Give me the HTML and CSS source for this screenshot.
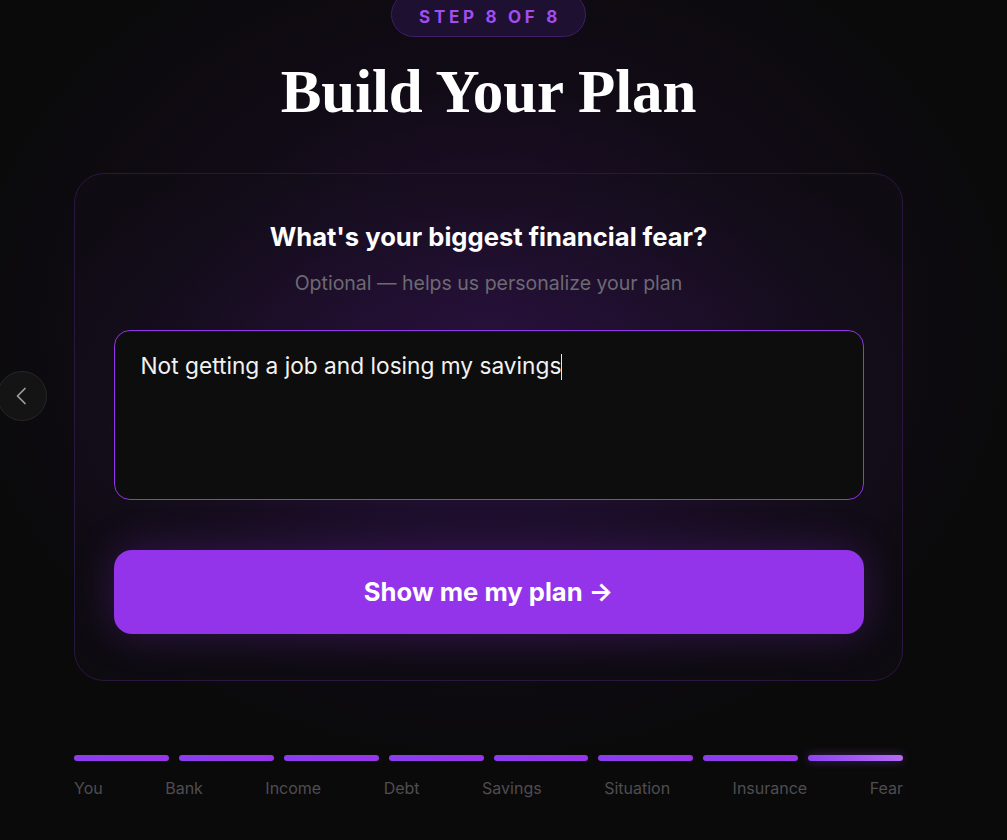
FILE: index.html
```html
<!DOCTYPE html>
<html lang="en">
<head>
<meta charset="utf-8">
<title>Build Your Plan</title>
<link rel="stylesheet" href="styles.css">
</head>
<body>
<div class="glow"></div>
<button class="back" aria-label="Back">
  <svg width="22" height="22" viewBox="0 0 22 22" fill="none"><path d="M14 3.5 6.5 11l7.5 7.5" stroke="#a0a0a0" stroke-width="1.7" stroke-linecap="round" stroke-linejoin="round"/></svg>
</button>
<main class="page">
  <div class="head">
    <div class="pill">STEP 8 OF 8</div>
    <h1 class="title">Build Your Plan</h1>
  </div>
  <section class="card">
    <h2 class="question">What's your biggest financial fear?</h2>
    <p class="hint">Optional — helps us personalize your plan</p>
    <div class="field"><span class="field-text">Not getting a job and losing my savings</span><span class="caret"></span></div>
    <button class="cta">Show me my plan →</button>
  </section>
  <div class="progress">
    <div class="bars">
      <span class="bar"></span><span class="bar"></span><span class="bar"></span><span class="bar"></span>
      <span class="bar"></span><span class="bar"></span><span class="bar"></span><span class="bar current"></span>
    </div>
    <div class="labels">
      <span>You</span><span>Bank</span><span>Income</span><span>Debt</span><span>Savings</span><span>Situation</span><span>Insurance</span><span>Fear</span>
    </div>
  </div>
</main>
</body>
</html>
```
FILE: styles.css
```css
* { box-sizing: border-box; }
html, body { margin: 0; height: 100%; }
body {
  background: #0a0a0a;
  font-family: Inter, "Noto Sans", sans-serif;
  color: #fff;
  overflow: hidden;
  position: relative;
}
.glow {
  position: absolute;
  left: 488px; top: 330px;
  width: 1100px; height: 900px;
  transform: translate(-50%, -50%);
  background: radial-gradient(closest-side, rgba(60, 20, 90, 0.55), rgba(40, 14, 60, 0.25) 55%, rgba(10, 10, 10, 0) 100%);
  pointer-events: none;
}
.back {
  position: absolute;
  left: -3px; top: 371px;
  width: 50px; height: 50px;
  border-radius: 50%;
  background: #141414;
  border: 1px solid #262626;
  display: flex; align-items: center; justify-content: center;
  padding: 0;
}
.page {
  position: relative;
  width: 829px;
  margin-left: 74px;
}
.head {
  display: flex;
  flex-direction: column;
  align-items: center;
}
.pill {
  margin-top: -8px;
  height: 45px;
  width: 195px;
  border-radius: 999px;
  background: #1d1030;
  border: 1px solid #3e1f63;
  display: flex; align-items: center; justify-content: center;
  padding-top: 4px;
  padding-left: 3px;
  font-weight: 700;
  font-size: 17px;
  letter-spacing: 3.7px;
  color: #a24df0;
}
.title {
  margin: 18px 0 0;
  font-family: "Liberation Serif", "DejaVu Serif", serif;
  font-weight: 700;
  font-size: 61px;
  line-height: 1.2;
  letter-spacing: -0.1px;
}
.card {
  margin-top: 45px;
  border-radius: 30px;
  border: 1px solid #2a1740;
  background: radial-gradient(ellipse 60% 55% at 50% 45%, rgba(45, 18, 70, 0.75), rgba(24, 14, 34, 0.6) 70%, rgba(16, 12, 20, 0.6));
  padding: 46px 39px 46px;
  display: flex;
  flex-direction: column;
  align-items: center;
}
.question {
  margin: 0;
  font-size: 25.6px;
  font-weight: 700;
  line-height: 1.3;
}
.hint {
  margin: 17px 0 0;
  font-size: 19.5px;
  line-height: 1.4;
  color: #6d6a72;
}
.field {
  margin-top: 32px;
  width: 750px;
  height: 170px;
  border-radius: 16px;
  border: 1px solid #9333ea;
  background: #0d0d0d;
  padding: 20px 26px;
  font-size: 22.7px;
  line-height: 30px;
  color: #f2f2f2;
  display: flex;
  align-items: flex-start;
}
.caret {
  display: inline-block;
  width: 1px; height: 26px;
  margin-top: 3px;
  background: #e5e5e5;
}
.cta {
  margin-top: 50px;
  width: 750px;
  height: 84px;
  border: 0;
  border-radius: 18px;
  background: #9333ea;
  color: #fff;
  font-family: Inter, "Noto Sans", sans-serif;
  font-size: 25.6px;
  font-weight: 700;
  box-shadow: 0 0 40px rgba(147, 51, 234, 0.28);
}
.progress {
  margin-top: 74px;
}
.bars {
  display: flex;
  gap: 10px;
}
.bar {
  flex: 1;
  height: 6px;
  border-radius: 3px;
  background: linear-gradient(90deg, #8b3df0, #9a35e8);
}
.bar.current {
  background: linear-gradient(90deg, #8e45f2, #b46cf7);
  box-shadow: 0 0 10px rgba(168, 85, 247, 0.35);
}
.labels {
  margin-top: 17px;
  display: flex;
  justify-content: space-between;
  font-size: 16px;
  line-height: 20px;
  color: #4f4d52;
}
```
